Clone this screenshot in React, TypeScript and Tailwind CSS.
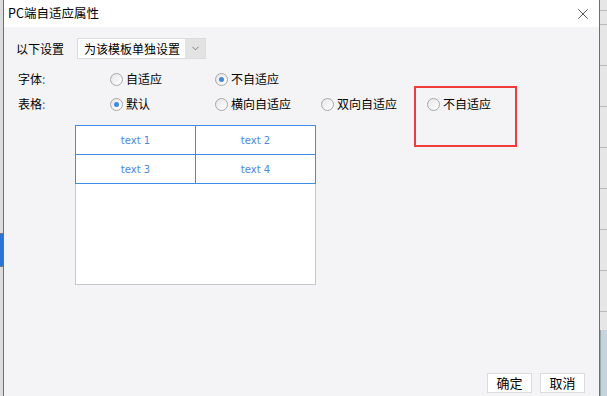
import { X, ChevronDown } from 'lucide-react';

function Radio({ label, checked }: { label: string; checked?: boolean }) {
  return (
    <div className="flex items-center gap-[3px]">
      <span className="flex h-[13px] w-[13px] items-center justify-center rounded-full border border-[#a8a8a8] bg-gradient-to-br from-[#e6e6e6] to-white">
        {checked && <span className="h-[5px] w-[5px] rounded-full bg-[#3b8ae6]" />}
      </span>
      <span>{label}</span>
    </div>
  );
}

const sideLines = [10, 24, 65, 106, 147, 188, 229, 270, 311];

export default function App() {
  return (
    <div
      className="flex h-[396px] w-[607px] overflow-hidden bg-[#e9e9e9] text-[12px] text-black"
      style={{ fontFamily: '"Noto Sans CJK SC", "Noto Sans", sans-serif' }}
    >
      {/* left edge of the page behind */}
      <div className="flex w-[3px] flex-col bg-[#dcdcdc]">
        <div className="mt-[233px] h-[34px] border-y border-[#777] bg-[#2a73d6]" />
      </div>

      {/* dialog */}
      <div className="flex flex-1 flex-col border-x border-[#6f6f6f] bg-[#f4f4f6]">
        <div className="flex h-[27px] items-center justify-between bg-white pl-[4px] pr-[7px]">
          <span className="text-[12.5px] leading-none">PC端自适应属性</span>
          <X size={18} strokeWidth={1} className="text-[#222]" />
        </div>

        <div className="relative flex flex-1 flex-col">
          {/* row 1 */}
          <div className="mt-[11px] flex h-[21px] items-center pl-[12px]">
            <span className="w-[61px]">以下设置</span>
            <div className="flex h-[21px] items-stretch border border-[#dcdcdc] bg-white">
              <span className="flex w-[107px] items-center pl-[6px]">为该模板单独设置</span>
              <span className="flex w-[20px] items-center justify-center bg-[#e3e3e3]">
                <ChevronDown size={11} strokeWidth={1.5} className="text-[#555]" />
              </span>
            </div>
          </div>

          {/* row 2 */}
          <div className="mt-[10px] flex h-[20px] items-center pl-[14px]">
            <span className="w-[92px]">
              字体<span className="text-[#3b6fc4]">:</span>
            </span>
            <div className="w-[105px]">
              <Radio label="自适应" />
            </div>
            <div className="w-[106px]">
              <Radio label="不自适应" checked />
            </div>
          </div>

          {/* row 3 */}
          <div className="mt-[5px] flex h-[20px] items-center pl-[14px]">
            <span className="w-[92px]">
              表格<span className="text-[#3b6fc4]">:</span>
            </span>
            <div className="w-[105px]">
              <Radio label="默认" checked />
            </div>
            <div className="w-[106px]">
              <Radio label="横向自适应" />
            </div>
            <div className="w-[106px]">
              <Radio label="双向自适应" />
            </div>
            <div className="w-[106px]">
              <Radio label="不自适应" />
            </div>
          </div>

          {/* preview */}
          <div className="ml-[71px] mt-[11px] flex h-[160px] w-[241px] flex-col border border-[#c8c8c8] bg-white">
            <div
              className="-m-px grid grid-cols-2 gap-px bg-[#3d8ee8] p-px text-[10px] text-[#4a8ae0]"
              style={{ fontFamily: '"DejaVu Sans", sans-serif' }}
            >
              <div className="flex h-[28px] items-center justify-center bg-white">text 1</div>
              <div className="flex h-[28px] items-center justify-center bg-white">text 2</div>
              <div className="flex h-[28px] items-center justify-center bg-white">text 3</div>
              <div className="flex h-[28px] items-center justify-center bg-white">text 4</div>
            </div>
          </div>

          {/* buttons */}
          <div className="mt-auto mb-[3px] flex justify-end gap-[8px] pr-[14px]">
            <button className="flex h-[20px] w-[45px] items-center justify-center border border-[#dcdcdc] bg-white text-[13px]">
              确定
            </button>
            <button className="flex h-[20px] w-[45px] items-center justify-center border border-[#dcdcdc] bg-white text-[13px]">
              取消
            </button>
          </div>

          {/* annotation */}
          <div className="absolute left-[410px] top-[59px] h-[61px] w-[103px] border-2 border-[#f23b3b]" />
        </div>
      </div>

      {/* right edge of the page behind */}
      <div className="relative w-[7px] bg-[#e6e6e6]">
        {sideLines.map((y) => (
          <div key={y} className="absolute left-0 right-0 h-px bg-[#b9b9b9]" style={{ top: y }} />
        ))}
        <div className="absolute bottom-0 left-0 right-0 top-[330px] border-l border-[#9aa] bg-[#c5d3df]" />
      </div>
    </div>
  );
}
